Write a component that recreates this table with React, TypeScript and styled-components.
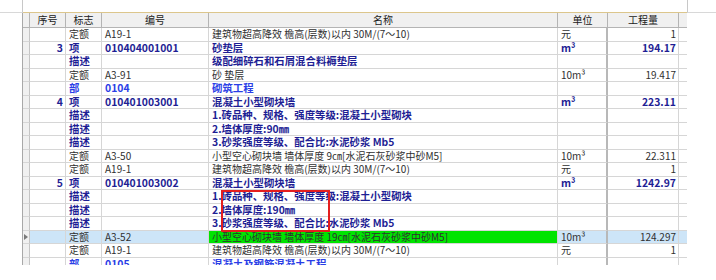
import React from "react";
import styled, { createGlobalStyle, css } from "styled-components";

type Kind = "de" | "xiang" | "desc" | "bu";

interface Item {
  kind: Kind;
  no?: string;
  flag: string;
  code?: string;
  name: string;
  unit?: string;
  qty?: string;
  selected?: boolean;
}

const CEILING = "建筑物超高降效 檐高(层数)以内 30M/(7～10)";
const DESC1 = "1.砖品种、规格、强度等级:混凝土小型砌块";
const DESC3 = "3.砂浆强度等级、配合比:水泥砂浆 Mb5";

const rows: Item[] = [
  { kind: "de", flag: "定额", code: "A19-1", name: CEILING, unit: "元", qty: "1" },
  { kind: "xiang", no: "3", flag: "项", code: "010404001001", name: "砂垫层", unit: "m³", qty: "194.17" },
  { kind: "desc", flag: "描述", name: "级配细碎石和石屑混合料褥垫层" },
  { kind: "de", flag: "定额", code: "A3-91", name: "砂 垫层", unit: "10m³", qty: "19.417" },
  { kind: "bu", flag: "部", code: "0104", name: "砌筑工程" },
  { kind: "xiang", no: "4", flag: "项", code: "010401003001", name: "混凝土小型砌块墙", unit: "m³", qty: "223.11" },
  { kind: "desc", flag: "描述", name: DESC1 },
  { kind: "desc", flag: "描述", name: "2.墙体厚度:90㎜" },
  { kind: "desc", flag: "描述", name: DESC3 },
  { kind: "de", flag: "定额", code: "A3-50", name: "小型空心砌块墙 墙体厚度 9㎝[水泥石灰砂浆中砂M5]", unit: "10m³", qty: "22.311" },
  { kind: "de", flag: "定额", code: "A19-1", name: CEILING, unit: "元", qty: "1" },
  { kind: "xiang", no: "5", flag: "项", code: "010401003002", name: "混凝土小型砌块墙", unit: "m³", qty: "1242.97" },
  { kind: "desc", flag: "描述", name: DESC1 },
  { kind: "desc", flag: "描述", name: "2.墙体厚度:190㎜" },
  { kind: "desc", flag: "描述", name: DESC3 },
  { kind: "de", flag: "定额", code: "A3-52", name: "小型空心砌块墙 墙体厚度 19㎝[水泥石灰砂浆中砂M5]", unit: "10m³", qty: "124.297", selected: true },
  { kind: "de", flag: "定额", code: "A19-1", name: CEILING, unit: "元", qty: "1" },
  { kind: "bu", flag: "部", code: "0105", name: "混凝土及钢筋混凝土工程" },
];

const COLS = "7px 36px 36px 107px 349px 50px 71px 8px";

const GlobalStyle = createGlobalStyle`
  html, body {
    margin: 0;
    padding: 0;
    background: #ffffff;
  }
  body {
    font-family: "Noto Sans CJK SC", "Liberation Sans", sans-serif;
    font-size: 10px;
  }
`;

const Page = styled.div`
  position: relative;
  width: 716px;
  height: 280px;
  overflow: hidden;
  background: #ffffff;
`;

const TopStrip = styled.div`
  display: flex;
  height: 13px;
`;

const StubLeft = styled.div`
  box-sizing: border-box;
  width: 23px;
  border-right: 1px solid #c8c8c8;
  border-bottom: 1px solid #d8d8d8;
`;

const StubMiddle = styled.div`
  flex: 1;
  border-bottom: 1px solid #dcc68c;
`;

const StubRight = styled.div`
  box-sizing: border-box;
  width: 29px;
  border-left: 1px solid #c8c8c8;
  border-bottom: 1px solid #d8d8d8;
`;

const Grid = styled.div`
  margin-left: 22px;
  width: 665px;
  height: 252px;
  overflow: hidden;
  border-left: 1px solid #a8a8a8;
  box-sizing: border-box;
`;

const HeaderRow = styled.div`
  display: grid;
  grid-template-columns: ${COLS};
  height: 15px;
  background: #f0f0f0;
`;

const HeadCell = styled.div<{ $last?: boolean }>`
  box-sizing: border-box;
  border-right: ${({ $last }) => ($last ? "none" : "1px solid #b4b4b4")};
  border-bottom: 1px solid #b4b4b4;
  text-align: center;
  line-height: 14px;
  color: #202020;
  white-space: nowrap;
`;

const DataRow = styled.div<{ $selected?: boolean }>`
  display: grid;
  grid-template-columns: ${COLS};
  height: 13.5px;
  background: ${({ $selected }) => ($selected ? "#cde5f8" : "#ffffff")};
`;

const kindStyle = {
  de: css`
    color: #303030;
    font-weight: 400;
  `,
  xiang: css`
    color: #1e1e94;
    font-weight: 700;
    font-size: 10.4px;
  `,
  desc: css`
    color: #1e1e94;
    font-weight: 700;
    font-size: 10.4px;
  `,
  bu: css`
    color: #2a3ee6;
    font-weight: 700;
    font-size: 10.4px;
  `,
};

const Cell = styled.div<{
  $kind: Kind;
  $align?: "left" | "right";
  $thick?: boolean;
  $green?: boolean;
  $last?: boolean;
}>`
  box-sizing: border-box;
  border-right: ${({ $thick, $last }) =>
    $last ? "none" : $thick ? "2px solid #b8b8b8" : "1px solid #d6d6d6"};
  border-bottom: 1px solid #d6d6d6;
  padding: 0 2px 0 3px;
  line-height: 12.5px;
  white-space: nowrap;
  text-align: ${({ $align }) => $align ?? "left"};
  background: ${({ $green }) => ($green ? "#00e400" : "transparent")};
  ${({ $kind }) => kindStyle[$kind]}
`;

const Indicator = styled.div`
  box-sizing: border-box;
  background: #f0f0f0;
  border-right: 1px solid #c4c4c4;
  border-bottom: 1px solid #d6d6d6;
  display: flex;
  align-items: center;
  justify-content: center;
`;

const Arrow = styled.span`
  width: 0;
  height: 0;
  border-top: 3px solid transparent;
  border-bottom: 3px solid transparent;
  border-left: 4px solid #7a7a7a;
`;

const Annotation = styled.div`
  position: absolute;
  left: 221px;
  top: 190px;
  width: 109px;
  height: 42px;
  box-sizing: border-box;
  border: 2px solid #e41e1e;
  pointer-events: none;
`;

const headers = ["", "序号", "标志", "编号", "名称", "单位", "工程量", ""];

export default function App() {
  return (
    <Page>
      <GlobalStyle />
      <TopStrip>
        <StubLeft />
        <StubMiddle />
        <StubRight />
      </TopStrip>
      <Grid>
        <HeaderRow>
          {headers.map((h, i) => (
            <HeadCell key={i} $last={i === headers.length - 1}>
              {h}
            </HeadCell>
          ))}
        </HeaderRow>
        {rows.map((r, i) => (
          <DataRow key={i} $selected={r.selected}>
            <Indicator>{r.selected && <Arrow />}</Indicator>
            <Cell $kind={r.kind} $align="right">
              {r.no}
            </Cell>
            <Cell $kind={r.kind}>{r.flag}</Cell>
            <Cell $kind={r.kind}>{r.code}</Cell>
            <Cell $kind={r.kind} $green={r.selected}>
              {r.name}
            </Cell>
            <Cell $kind={r.kind} $thick>
              {r.unit}
            </Cell>
            <Cell $kind={r.kind} $align="right">
              {r.qty}
            </Cell>
            <Cell $kind={r.kind} $last />
          </DataRow>
        ))}
      </Grid>
      <Annotation />
    </Page>
  );
}
